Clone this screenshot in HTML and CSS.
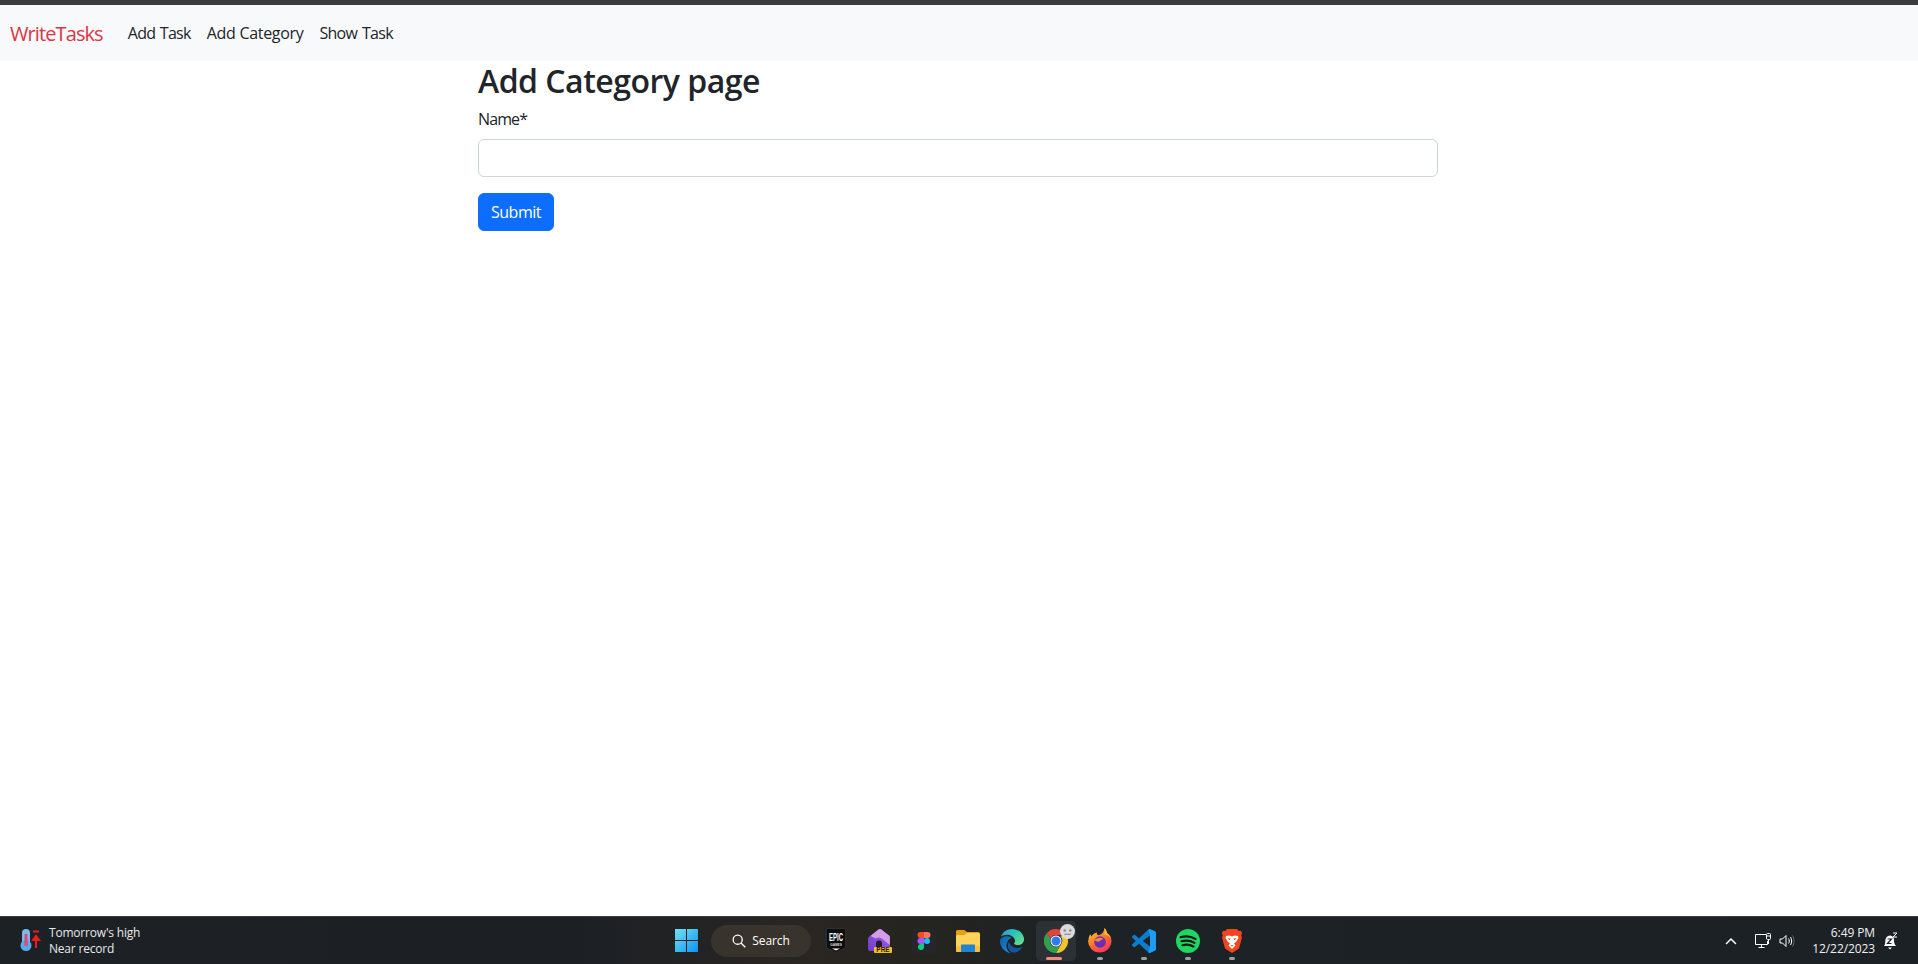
FILE: index.html
```html
<!DOCTYPE html>
<html lang="en">
<head>
<meta charset="utf-8">
<title>WriteTasks</title>
<link rel="stylesheet" href="styles.css">
</head>
<body>
<div class="topline"></div>
<nav class="navbar">
  <a class="brand" href="#">WriteTasks</a>
  <a class="nav-link" href="#">Add Task</a>
  <a class="nav-link wide" href="#">Add Category</a>
  <a class="nav-link tight" href="#">Show Task</a>
</nav>
<main class="page">
  <h1 class="title">Add Category page</h1>
  <label class="label" for="name">Name*</label>
  <input class="input" id="name" type="text">
  <button class="submit" type="button">Submit</button>
</main>
<footer class="taskbar">
  <div class="weather">
    <svg class="w-icon" width="26" height="26" viewBox="0 1 26 26">
      <rect x="4" y="2" width="8" height="16" rx="4" fill="#7cb8ee"/>
      <circle cx="8" cy="18.500" r="5.500" fill="#59a8ea"/>
      <rect x="6.500" y="7" width="3" height="12" fill="#e0486a"/>
      <rect x="15" y="3.500" width="6" height="2" fill="#f01c1c"/>
      <path d="M18 21V11M15 13l3-4 3 4z" stroke="#f01c1c" stroke-width="2" fill="#f01c1c"/>
    </svg>
    <div class="w-text"><span>Tomorrow's high</span><span>Near record</span></div>
  </div>
  <div class="center">
    <div class="tb-item">
      <svg width="25" height="25" viewBox="0 0 24 24">
        <defs><linearGradient id="win" x1="0" y1="0" x2="1" y2="1"><stop offset="0" stop-color="#6fe3f5"/><stop offset="1" stop-color="#0f93f0"/></linearGradient></defs>
        <path fill="url(#win)" d="M1 1h10.500v10.500H1zM12.500 1H23v10.500H12.500zM1 12.500h10.500V23H1zM12.500 12.500H23V23H12.500z"/>
      </svg>
    </div>
    <div class="search">
      <svg width="14" height="14" viewBox="0 0 16 16"><circle cx="6.500" cy="6.500" r="5.200" fill="none" stroke="#fff" stroke-width="1.500"/><path d="M10.200 10.200l5 5" stroke="#fff" stroke-width="1.600"/></svg>
      <span>Search</span>
    </div>
    <div class="tb-item">
      <svg width="20" height="25" viewBox="0 0 20 25">
        <path d="M.5.500h19v19L10 24.500.5 19.500z" fill="#0c0c0c" stroke="#2e2e2e"/>
        <text class="epic" transform="translate(10 12.500) scale(.6 1)" text-anchor="middle">EPIC</text>
        <text class="games" transform="translate(10 17.500)" text-anchor="middle">GAMES</text>
        <path d="M6 20.500h8L10 22.500z" fill="#fff"/>
      </svg>
    </div>
    <div class="tb-item">
      <svg width="24" height="24" viewBox="0 0 24 24">
        <defs><linearGradient id="pre" x1="0" y1="1" x2="1" y2="0"><stop offset="0" stop-color="#6d3bd0"/><stop offset="1" stop-color="#a565dc"/></linearGradient></defs>
        <path d="M0 9.500a2 2 0 01.8-1.500L10.500.600a2.400 2.400 0 012.800 0L21 6.500a2 2 0 01.8 1.500V22H2a2 2 0 01-2-2z" fill="url(#pre)"/>
        <path d="M10.500.600a2.400 2.400 0 012.800 0L21 6.500a2 2 0 01.8 1.500v8l-8-6.500c-2-1.500-4-1.500-6 0L2.500 7z" fill="#d49ce9"/>
        <path d="M8 19v-4.500a3 3 0 016 0V19z" fill="#241a33"/>
        <rect x="6" y="18" width="18" height="6" rx="1" fill="#f4c020"/>
        <text class="pre" x="15" y="23.300" text-anchor="middle">PRE</text>
      </svg>
    </div>
    <div class="tb-item">
      <svg width="24" height="24" viewBox="0 0 24 24">
        <rect width="24" height="24" rx="2" fill="#26262a"/>
        <path d="M8.500 3H12v6H8.500a3 3 0 010-6z" fill="#f24e1e"/>
        <path d="M12 3h3.500a3 3 0 010 6H12z" fill="#ff7262"/>
        <path d="M8.500 9H12v6H8.500a3 3 0 010-6z" fill="#a259ff"/>
        <circle cx="15" cy="12" r="3" fill="#1abcfe"/>
        <path d="M8.500 15H12v3a3 3 0 11-3.500-3z" fill="#0acf83"/>
      </svg>
    </div>
    <div class="tb-item">
      <svg width="24" height="22" viewBox="0 0 24 22">
        <path d="M0 1.500A1.500 1.500 0 011.500 0h6.700L11 2h11a2 2 0 012 2v3H0z" fill="#e8a010"/>
        <path d="M0 6.500c0-.8.700-1.500 1.500-1.500H8l3-2h11.500c.8 0 1.500.7 1.500 1.500V20.500c0 .8-.7 1.500-1.500 1.500h-21C.7 22 0 21.300 0 20.500z" fill="#fdd35c"/>
        <rect x="0" y="16" width="24" height="6" rx="1.500" fill="#f7bf3c"/>
        <path d="M5 15.500a1 1 0 011-1h12a1 1 0 011 1V22H5z" fill="#1d84d6"/>
      </svg>
    </div>
    <div class="tb-item">
      <svg width="24" height="24" viewBox="0 0 24 24">
        <defs>
          <linearGradient id="edge" x1="0" y1="0" x2="1" y2=".7"><stop offset="0" stop-color="#1b9de2"/><stop offset=".6" stop-color="#36c8b0"/><stop offset="1" stop-color="#62dc8f"/></linearGradient>
          <linearGradient id="edge2" x1="0" y1="0" x2="1" y2="1"><stop offset="0" stop-color="#0b5ea8"/><stop offset="1" stop-color="#1d8fe0"/></linearGradient>
        </defs>
        <path fill="#14579f" d="M21.860 17.860q.14 0 .25.12.1.13.1.25t-.11.33l-.32.46-.43.53-.44.5q-.21.25-.38.42l-.22.23q-.58.53-1.340 1.040-.76.51-1.600.91-.86.4-1.740.64t-1.670.24q-.9 0-1.690-.28-.8-.28-1.480-.78-.68-.5-1.220-1.170-.53-.66-.92-1.440-.38-.77-.58-1.600-.2-.83-.2-1.670 0-1 .32-1.960.33-.97.87-1.800.14.95.55 1.770.41.82 1.020 1.500.6.68 1.380 1.210.78.54 1.640.9.86.36 1.770.56.92.2 1.800.2 1.120 0 2.180-.24 1.060-.23 2.060-.72l.2-.1.2-.05z"/>
        <path fill="url(#edge2)" d="M6.360 16.590q0 1.100.27 2.150.27 1.060.78 2.030.51.96 1.240 1.770.74.82 1.660 1.400-1.470-.2-2.800-.74-1.330-.55-2.480-1.370-1.150-.83-2.080-1.900-.92-1.070-1.580-2.330T.36 14.940Q0 13.540 0 12.060q0-.81.32-1.490.31-.68.83-1.230.53-.55 1.200-.96.66-.4 1.350-.66.74-.27 1.500-.39.78-.12 1.550-.12.7 0 1.420.1.72.12 1.400.35.68.23 1.320.57.63.35 1.160.83-.35 0-.7.07-.33.07-.65.23v-.02q-.63.28-1.200.74-.57.46-1.050 1.040-.48.58-.87 1.260-.38.67-.65 1.390-.27.71-.42 1.440-.15.72-.15 1.380z"/>
        <path fill="url(#edge)" d="M11.960.06q1.700 0 3.330.39 1.630.38 3.070 1.150 1.430.77 2.620 1.930 1.180 1.160 1.980 2.700.49.94.76 1.960.28 1 .28 2.080 0 .89-.23 1.700-.24.8-.69 1.480-.45.68-1.100 1.220-.64.53-1.450.88-.54.24-1.110.36-.58.13-1.160.13-.42 0-.97-.03-.54-.03-1.100-.12-.55-.1-1.050-.28-.5-.19-.84-.5-.12-.09-.23-.24-.1-.16-.1-.33 0-.15.16-.35.16-.2.35-.5.2-.28.36-.68.16-.4.16-.95 0-1.060-.4-1.960-.4-.91-1.060-1.640-.66-.74-1.520-1.280-.86-.55-1.790-.89-.84-.3-1.720-.44-.87-.14-1.760-.14-1.550 0-3.060.45T.94 7.550q.71-1.740 1.810-3.130Q3.860 3.030 5.270 2.050q1.400-.97 3.050-1.480 1.640-.51 3.640-.51z"/>
      </svg>
    </div>
    <div class="tb-item active">
      <svg width="24" height="24" viewBox="0 0 24 24">
        <path d="M12 0a12 12 0 0110.400 6H12a6 6 0 00-5.600 3.800L2.700 4.300A12 12 0 0112 0z" fill="#e0443a"/>
        <path d="M22.400 6A12 12 0 0112 24l5.200-9a6 6 0 00-.6-7.500z" fill="#f2c230"/>
        <path d="M2.700 4.300A12 12 0 0012 24l5.200-9a6 6 0 01-10.800-5.200z" fill="#30a04f"/>
        <circle cx="12" cy="12" r="5.500" fill="#fff"/>
        <circle cx="12" cy="12" r="4.500" fill="#2e7cf0"/>
      </svg>
      <span class="badge">
        <svg width="13" height="13" viewBox="0 0 14 14"><circle cx="4" cy="6" r="1.300" fill="#888"/><circle cx="10" cy="6" r="1.300" fill="#888"/><path d="M3.500 10h7" stroke="#888" stroke-width="1.200"/></svg>
      </span>
      <i class="running red"></i>
    </div>
    <div class="tb-item">
      <svg width="24" height="25" viewBox="0 0 24 25">
        <defs><linearGradient id="ff" x1=".2" y1="0" x2=".8" y2="1"><stop offset="0" stop-color="#ffd02e"/><stop offset=".55" stop-color="#ff6a2a"/><stop offset="1" stop-color="#ef2d6e"/></linearGradient></defs>
        <path d="M.5 12.500C.5 10 1 8 2.200 6.200L3.500 8.500C5 6 6.800 4.800 9 4.500c-.3 1.300.1 2.200 1.300 2.800 3-.5 5.700-2.700 6.200-7.300 1.500 1.800 2.200 3.500 2.500 5 2.800 2 4.500 4.800 4.500 8a11.750 11.750 0 01-23.500-.5z" fill="url(#ff)"/>
        <path d="M16.500 0c1.500 1.800 2.200 3.500 2.500 5 2 1.500 3.500 3.300 4.200 5.500-1.700-2.500-4-3.800-7-4.300C17 4.500 17 2.500 16.500 0z" fill="#ffc226"/>
        <circle cx="12" cy="14" r="5.800" fill="#6c2bb8"/>
        <path d="M6.500 12.500c1.800-3 6.500-3.800 9-1.300-2 .2-3 .8-3.500 2-1.800.7-3.800.6-5.500-.7z" fill="#f5843c"/>
      </svg>
      <i class="running"></i>
    </div>
    <div class="tb-item">
      <svg width="24" height="24" viewBox="0 0 24 24">
        <path fill="#0a7fcf" d="M23.150 2.587L18.210.21a1.494 1.494 0 0 0-1.705.29l-9.460 8.630-4.120-3.128a.999.999 0 0 0-1.276.057L.327 7.261A1 1 0 0 0 .326 8.740L3.899 12 .326 15.260a1 1 0 0 0 .001 1.479L1.650 17.940a.999.999 0 0 0 1.276.057l4.120-3.128 9.460 8.630a1.492 1.492 0 0 0 1.704.29l4.942-2.377A1.500 1.500 0 0 0 24 20.060V3.939a1.500 1.500 0 0 0-.85-1.352zm-5.146 14.861L10.826 12l7.178-5.448v10.896z"/>
        <path fill="#1f9cf0" d="M16.500.5a1.494 1.494 0 0 1 1.710-.29l4.940 2.377A1.500 1.500 0 0 1 24 3.939V20.060a1.500 1.500 0 0 1-.85 1.352l-4.942 2.377a1.492 1.492 0 0 1-1.704-.29l1.500-6.050V6.552z"/>
      </svg>
      <i class="running"></i>
    </div>
    <div class="tb-item">
      <svg width="24" height="24" viewBox="0 0 24 24">
        <circle cx="12" cy="12" r="12" fill="#1ed760"/>
        <path d="M4.500 8.300c5-1.500 10.500-1 15 1.700M5.500 12.300c4.500-1.200 9-.8 13 1.500M6.500 16.200c3.800-1 7.500-.7 11 1.300" fill="none" stroke="#17171a" stroke-width="2.100" stroke-linecap="round"/>
      </svg>
      <i class="running"></i>
    </div>
    <div class="tb-item">
      <svg width="20" height="24" viewBox="0 0 20 24">
        <path d="M5 0h10l1.800 2L19 1.800 20 4l-.8 2.500.8 2L17 19.500 10 24l-7-4.500L0 8.500l.8-2L0 4l1-2.200L3.200 2z" fill="#f0451e"/>
        <path d="M4 7l3.500-.5L10 7.500l2.500-1L16 7l.5 2-2.500 4-2 1.500 1.500 2L10 20l-3.500-3.500 1.500-2L6 13 3.500 9z" fill="#fff"/>
        <path d="M5.500 9l3 .8-1 1.500zM14.500 9l-3 .8 1 1.500zM8.500 16h3L10 17.500z" fill="#f0451e"/>
      </svg>
      <i class="running"></i>
    </div>
  </div>
  <div class="tray">
    <svg class="chev" width="12" height="8" viewBox="0 0 12 8"><path d="M1 7l5-5 5 5" fill="none" stroke="#fff" stroke-width="1.500"/></svg>
    <svg class="net" width="18" height="18" viewBox="0 0 18 18" fill="none" stroke="#fff"><path d="M12 2.500H1.500v10h12V9M4.500 15.500h6M7.500 12.500v3"/><rect x="12.500" y="1.500" width="4" height="6" rx="1"/><path d="M12.500 4h4M14.500 7.500V12"/></svg>
    <svg class="vol" width="16" height="16" viewBox="0 0 16 16" fill="none" stroke="#fff"><path d="M1 6h2.500L7 2.500v11L3.500 10H1z"/><path d="M9.500 5.500c1 1.500 1 3.500 0 5M11.500 4c1.500 2.500 1.500 5.500 0 8"/><path d="M13.500 2.500c2 3 2 8 0 11" stroke="#666"/></svg>
    <div class="clock"><span>6:49 PM</span><span>12/22/2023</span></div>
    <svg class="bell" width="18" height="18" viewBox="0 0 18 18"><path d="M3 14c1.500-1.500 1-4 1.500-6.500C5 5 7 3.500 9.500 3.500c2.500.5 3.500 2.500 3.500 4.500 0 2.500.5 4.500 2 6z" fill="#fff"/><path d="M7 15.500h4l-2 2z" fill="#fff"/><path d="M6.500 7h4l-4 4.500h4" stroke="#1b2025" stroke-width="1.200" fill="none"/><path d="M12 1h4l-4 4h4" stroke="#fff" fill="none"/></svg>
  </div>
</footer>
</body>
</html>
```
FILE: styles.css
```css
* { box-sizing: border-box; }
html, body { height: 100%; }
body {
  margin: 0;
  display: flex;
  flex-direction: column;
  overflow: hidden;
  background: #fff;
  color: #212529;
  font-family: "Open Sans", "Noto Sans", sans-serif;
  font-size: 16px;
}
.topline { height: 5px; background: #3b3b3b; flex: none; }
.navbar {
  flex: none;
  height: 56px;
  display: flex;
  align-items: center;
  padding: 0 10px;
  background: #f8f9fa;
}
.brand { font-size: 20px; color: #dc3545; text-decoration: none; margin-right: 17px; letter-spacing: -.9px; }
.nav-link { color: #212529; text-decoration: none; padding: 0 8px; font-size: 16px; letter-spacing: -.7px; word-spacing: 1px; }
.nav-link.wide { letter-spacing: -.3px; word-spacing: 0; }
.nav-link.tight { letter-spacing: -.75px; word-spacing: 1.500px; }
.page {
  flex: 1;
  width: 960px;
  margin-left: 478px;
  display: flex;
  flex-direction: column;
  align-items: flex-start;
}
.title { margin: 0 0 6px; font-size: 32px; font-weight: 600; line-height: 40px; letter-spacing: -.5px; }
.label { margin-bottom: 8px; line-height: 24px; font-size: 16px; letter-spacing: -.9px; }
.input {
  width: 100%;
  height: 38px;
  padding: 6px 12px;
  border: 1px solid #ced4da;
  border-radius: 6px;
  background: #fff;
  margin-bottom: 16px;
}
.submit {
  width: 76px;
  height: 38px;
  padding: 0;
  border: 1px solid #0d6efd;
  border-radius: 6px;
  background: #0d6efd;
  color: #fff;
  font: inherit;
  letter-spacing: -.5px;
}
.taskbar {
  flex: none;
  height: 48px;
  display: grid;
  grid-template-columns: 1fr auto 1fr;
  align-items: center;
  background: linear-gradient(90deg, #1c2126 0%, #1c2025 30%, #2a2622 42%, #25241f 48%, #1d2226 56%, #1c2126 100%);
  border-top: 1px solid #3a3d40;
  color: #fff;
  font-size: 12px;
}
.weather { display: flex; align-items: center; gap: 5px; padding-left: 18px; }
.w-text { display: flex; flex-direction: column; line-height: 16px; letter-spacing: -.2px; color: #e8e8e8; }
.center { display: flex; align-items: center; }
.tb-item {
  position: relative;
  width: 44px;
  height: 40px;
  display: flex;
  align-items: center;
  justify-content: center;
}
.tb-item.active {
  border: solid transparent;
  border-width: 0 2px;
  background: #2c3136 padding-box;
  border-radius: 6px;
}
.search {
  width: 100px;
  height: 32px;
  margin: 0 3px;
  border-radius: 16px;
  background: #38332c;
  display: flex;
  align-items: center;
  justify-content: center;
  gap: 6px;
  letter-spacing: -.1px;
}
.epic { font: 700 10px "Liberation Sans", sans-serif; fill: #fff; }
.games { font: 700 3.200px "Liberation Sans", sans-serif; fill: #ddd; }
.pre { font: 700 6.500px "Liberation Sans", sans-serif; fill: #1b1b1b; }
.badge { position: absolute; right: 1px; top: 3px; width: 15px; height: 15px; border-radius: 50%; background: #dadada; display: flex; align-items: center; justify-content: center; }
.running { position: absolute; left: 19px; bottom: 1px; width: 6px; height: 3px; border-radius: 2px; background: #9aa0a6; }
.running.red { left: 10px; width: 16px; background: #f28b7d; }
.tray { display: flex; align-items: center; justify-content: flex-end; padding-right: 19px; }
.chev { margin-right: 17px; }
.net { margin-right: 7px; }
.vol { margin-right: 17px; }
.clock { display: flex; flex-direction: column; align-items: flex-end; line-height: 16px; color: #f0f0f0; letter-spacing: -.1px; }
.bell { margin-left: 6px; }
```
